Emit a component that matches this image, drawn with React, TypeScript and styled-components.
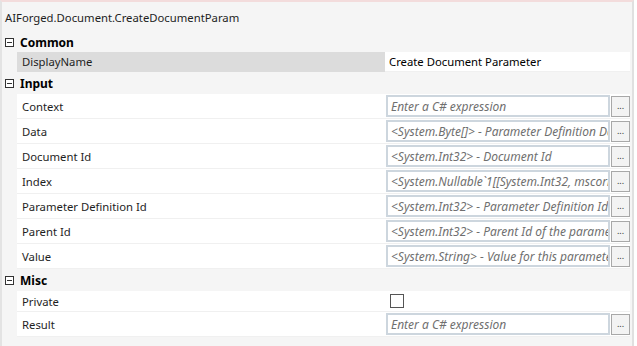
import React from 'react';
import styled, { createGlobalStyle } from 'styled-components';

const GlobalStyle = createGlobalStyle`
  html, body {
    margin: 0;
    padding: 0;
    background: #ffffff;
  }
  body {
    font-family: "Noto Sans", "Open Sans", sans-serif;
    font-size: 11.3px;
    color: #1e1e1e;
  }
`;

const Panel = styled.div`
  width: 630px;
  height: 344px;
  background: #f5f5f5;
  border-top: 2px solid #f3dcdc;
  border-left: 2px solid #e3e3e3;
  border-right: 2px solid #e0e0e0;
  display: flex;
  flex-direction: column;
`;

const Title = styled.div`
  height: 30px;
  display: flex;
  align-items: center;
  padding-left: 3px;
  color: #1e1e1e;
`;

const CategoryHeader = styled.div<{ $h: number }>`
  height: ${p => p.$h}px;
  display: flex;
  align-items: center;
  gap: 6px;
  padding-left: 3px;
  font-weight: bold;
  font-size: 12px;
  color: #000;
`;

const Toggle = styled.span`
  width: 7px;
  height: 7px;
  border: 1px solid #333;
  position: relative;
  background: #fff;
  &::after {
    content: '';
    position: absolute;
    left: 1px;
    right: 1px;
    top: 3px;
    height: 1px;
    background: #333;
  }
`;

const Row = styled.div<{ $h: number }>`
  display: grid;
  grid-template-columns: 15px 368px 245px;
  height: ${p => p.$h}px;
`;

const NameCell = styled.div<{ $selected?: boolean }>`
  background: ${p => (p.$selected ? '#dcdcdc' : '#ffffff')};
  border-bottom: 1px solid ${p => (p.$selected ? '#dcdcdc' : '#f0f0f0')};
  display: flex;
  align-items: center;
  padding-left: 5px;
`;

const ValueCell = styled.div`
  background: #ffffff;
  border-bottom: 1px solid #f0f0f0;
  display: flex;
  align-items: center;
  gap: 1px;
  padding-left: 1px;
  min-width: 0;
`;

const PlainValue = styled.span`
  padding-left: 3px;
  color: #000;
`;

const ExprBox = styled.div`
  width: 217px;
  height: 18px;
  border: 2px solid #cdd6de;
  display: flex;
  align-items: center;
  padding-left: 3px;
  font-style: italic;
  font-size: 12px;
  color: #6f6f6f;
  white-space: nowrap;
  overflow: hidden;
  box-sizing: content-box;
  flex: none;
`;

const EllipsisButton = styled.button`
  width: 19px;
  height: 21px;
  border: 1px solid #a8a8a8;
  background: #f3f3f3;
  padding: 0 0 4px;
  font: 9px "Noto Sans", sans-serif;
  color: #333;
  display: flex;
  align-items: flex-end;
  justify-content: center;
  flex: none;
`;

const CheckBox = styled.span`
  width: 12px;
  height: 12px;
  border: 1px solid #555;
  background: #fff;
  margin-left: 4px;
`;

type Prop = {
  name: string;
  kind: 'text' | 'expr' | 'check';
  value?: string;
  selected?: boolean;
};

const categories: { title: string; h: number; props: Prop[] }[] = [
  {
    title: 'Common',
    h: 20,
    props: [{ name: 'DisplayName', kind: 'text', value: 'Create Document Parameter', selected: true }],
  },
  {
    title: 'Input',
    h: 22,
    props: [
      { name: 'Context', kind: 'expr', value: 'Enter a C# expression' },
      { name: 'Data', kind: 'expr', value: '<System.Byte[]> - Parameter Definition Data' },
      { name: 'Document Id', kind: 'expr', value: '<System.Int32> - Document Id' },
      { name: 'Index', kind: 'expr', value: '<System.Nullable`1[[System.Int32, mscorlib]]>' },
      { name: 'Parameter Definition Id', kind: 'expr', value: '<System.Int32> - Parameter Definition Id' },
      { name: 'Parent Id', kind: 'expr', value: '<System.Int32> - Parent Id of the parameter' },
      { name: 'Value', kind: 'expr', value: '<System.String> - Value for this parameter' },
    ],
  },
  {
    title: 'Misc',
    h: 22,
    props: [
      { name: 'Private', kind: 'check' },
      { name: 'Result', kind: 'expr', value: 'Enter a C# expression' },
    ],
  },
];

const rowHeight = { text: 20, check: 21, expr: 25 };

const PropertyRow = ({ p }: { p: Prop }) => (
  <Row $h={rowHeight[p.kind]}>
    <span />
    <NameCell $selected={p.selected}>{p.name}</NameCell>
    <ValueCell>
      {p.kind === 'text' && <PlainValue>{p.value}</PlainValue>}
      {p.kind === 'check' && <CheckBox />}
      {p.kind === 'expr' && (
        <>
          <ExprBox>{p.value}</ExprBox>
          <EllipsisButton>...</EllipsisButton>
        </>
      )}
    </ValueCell>
  </Row>
);

export default function App() {
  return (
    <>
      <GlobalStyle />
      <Panel>
        <Title>AIForged.Document.CreateDocumentParam</Title>
        {categories.map(c => (
          <React.Fragment key={c.title}>
            <CategoryHeader $h={c.h}>
              <Toggle />
              {c.title}
            </CategoryHeader>
            {c.props.map(p => (
              <PropertyRow key={p.name} p={p} />
            ))}
          </React.Fragment>
        ))}
      </Panel>
    </>
  );
}
